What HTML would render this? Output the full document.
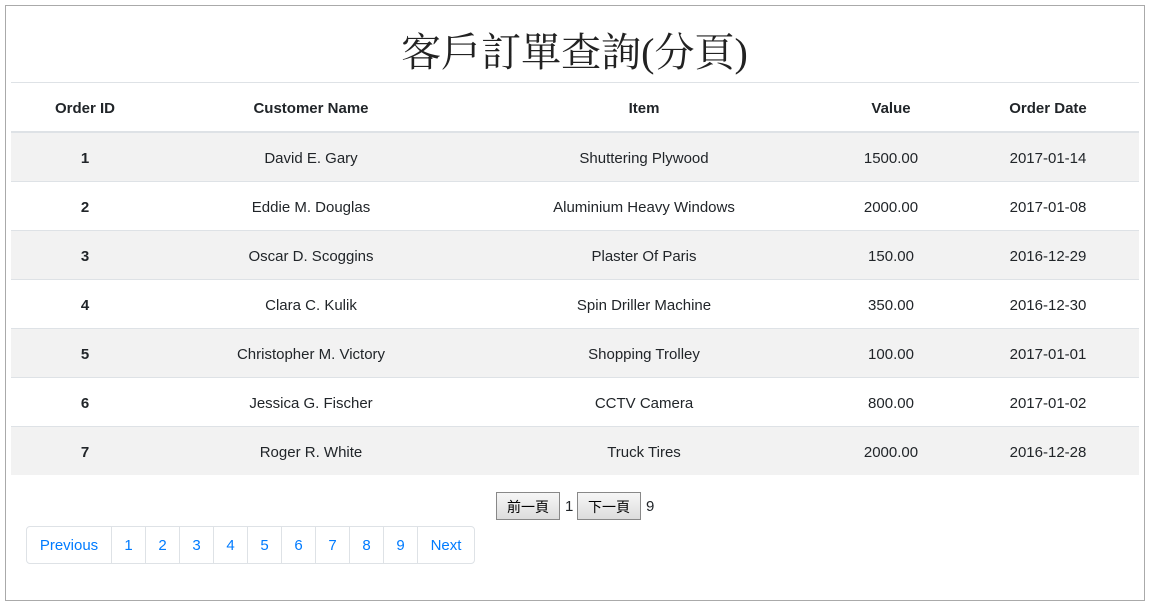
<!DOCTYPE html>
<html><head><meta charset="utf-8"><style>
body{margin:0;background:#fff;font-family:"Segoe UI","Liberation Sans","Noto Sans CJK TC",sans-serif;color:#212529;}
.box{position:absolute;left:5px;top:5px;width:1138px;height:594px;border:1px solid #aaa;}
h1{position:absolute;left:0;top:28px;width:1149px;margin:0;text-align:center;font-family:"Liberation Serif","Noto Serif CJK SC",serif;font-weight:normal;font-size:40px;line-height:50px;color:#222;}
table{position:absolute;left:11px;top:82px;width:1128px;border-collapse:collapse;table-layout:fixed;font-size:15px;}
th,td{text-align:center;padding:2px 0 0 0;border-top:1px solid #dee2e6;}
th{height:46px;font-weight:bold;border-bottom:2px solid #dee2e6;}
td{height:46px;}
tbody tr:nth-child(odd){background:#f2f2f2;}
td:first-child{font-weight:bold;}
.btn{position:absolute;top:492px;height:28px;border:1px solid #888;background:linear-gradient(#f6f6f6,#ddd);font-family:"Noto Sans CJK TC",sans-serif;font-size:14px;line-height:28px;text-align:center;color:#000;box-sizing:border-box;}
.t{position:absolute;top:498px;font-size:15px;}
.pg{position:absolute;left:26px;top:526px;height:38px;display:flex;border:1px solid #dee2e6;border-radius:4px;box-sizing:border-box;}
.pg span{color:#007bff;font-size:15px;line-height:38px;text-align:center;border-left:1px solid #dee2e6;}
.pg span:first-child{border-left:none;}
</style></head><body>
<div class="box"></div>
<h1>客戶訂單查詢(分頁)</h1>
<table>
<colgroup><col style="width:148px"><col style="width:304px"><col style="width:362px"><col style="width:132px"><col style="width:182px"></colgroup>
<thead><tr><th>Order ID</th><th>Customer Name</th><th>Item</th><th>Value</th><th>Order Date</th></tr></thead>
<tbody>
<tr><td>1</td><td>David E. Gary</td><td>Shuttering Plywood</td><td>1500.00</td><td>2017-01-14</td></tr>
<tr><td>2</td><td>Eddie M. Douglas</td><td>Aluminium Heavy Windows</td><td>2000.00</td><td>2017-01-08</td></tr>
<tr><td>3</td><td>Oscar D. Scoggins</td><td>Plaster Of Paris</td><td>150.00</td><td>2016-12-29</td></tr>
<tr><td>4</td><td>Clara C. Kulik</td><td>Spin Driller Machine</td><td>350.00</td><td>2016-12-30</td></tr>
<tr><td>5</td><td>Christopher M. Victory</td><td>Shopping Trolley</td><td>100.00</td><td>2017-01-01</td></tr>
<tr><td>6</td><td>Jessica G. Fischer</td><td>CCTV Camera</td><td>800.00</td><td>2017-01-02</td></tr>
<tr><td>7</td><td>Roger R. White</td><td>Truck Tires</td><td>2000.00</td><td>2016-12-28</td></tr>
</tbody></table>
<div class="btn" style="left:496px;width:64px">前一頁</div>
<span class="t" style="left:565px">1</span>
<div class="btn" style="left:577px;width:64px">下一頁</div>
<span class="t" style="left:646px">9</span>
<div class="pg">
<span style="width:84px">Previous</span><span style="width:33px">1</span><span style="width:33px">2</span><span style="width:33px">3</span><span style="width:33px">4</span><span style="width:33px">5</span><span style="width:33px">6</span><span style="width:33px">7</span><span style="width:33px">8</span><span style="width:33px">9</span><span style="width:56px">Next</span>
</div>
</body></html>
